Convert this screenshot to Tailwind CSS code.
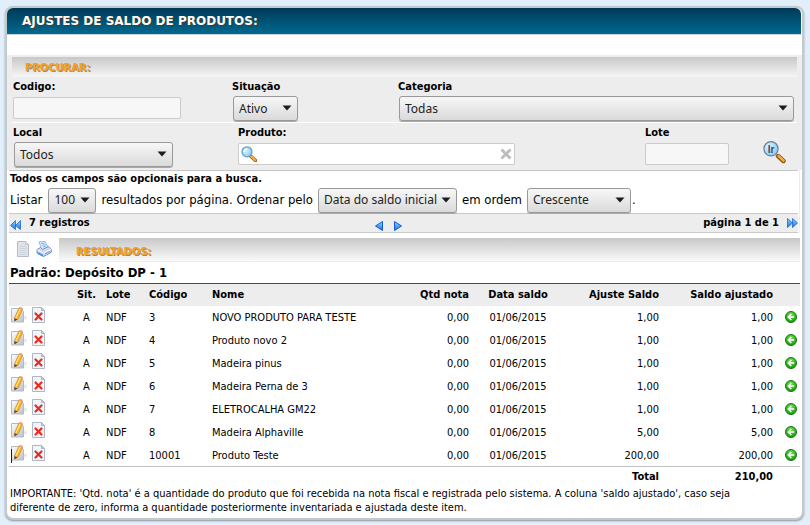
<!DOCTYPE html>
<html lang="pt-BR">

<head>
  <meta charset="UTF-8">
  <meta name="viewport" content="width=device-width, initial-scale=1.0">
  <title>Ajustes de saldo de produtos</title>
  <script src="https://cdn.jsdelivr.net/npm/@tailwindcss/browser@4"></script>
</head>

<body class="min-h-screen bg-[#e1effb] pl-[5px] pr-[6px] pt-[6px] pb-2 font-['DejaVu_Sans_Condensed','DejaVu_Sans',sans-serif] text-[11px] text-black">

  <!-- Shared icons -->
  <svg class="absolute size-0" aria-hidden="true">
    <defs>
      <linearGradient id="blue" x1="0" y1="0" x2="0" y2="1">
        <stop offset="0" stop-color="#8fd4ff" />
        <stop offset="1" stop-color="#1672e8" />
      </linearGradient>
      <radialGradient id="green" cx="0.5" cy="0.3" r="0.7">
        <stop offset="0" stop-color="#6fe04a" />
        <stop offset="1" stop-color="#139a0c" />
      </radialGradient>
      <radialGradient id="lens" cx="0.35" cy="0.35" r="0.8">
        <stop offset="0" stop-color="#dff5fd" />
        <stop offset="1" stop-color="#7cc4ec" />
      </radialGradient>
      <linearGradient id="sheet" x1="0" y1="0" x2="1" y2="1">
        <stop offset="0" stop-color="#ffffff" />
        <stop offset="1" stop-color="#b9c0cc" />
      </linearGradient>
    </defs>
    <symbol id="caret" viewBox="0 0 10 6">
      <path d="M0.500 0.500h9L5 5.500z" fill="#1c1c1c" />
    </symbol>
    <symbol id="edit" viewBox="0 0 16 16">
      <path d="M0.500 1.500h9l3 3v10.500h-12z" fill="url(#sheet)" stroke="#b3b9c6" />
      <path d="M13.500 8l2.500 2.500-2.500 2.500z" fill="#dcdfe4" />
      <path d="M3.500 11L8 1l3.500 1.500L7.200 12l-3 1.500z" fill="#fbb320" stroke="#d08a1c" stroke-width="0.700" />
      <path d="M4.900 11L9.200 2" stroke="#ffe48a" stroke-width="1.200" />
      <path d="M7.900 1.300L8.800 -0.300l3.200 1.300-0.600 1.700z" fill="#e9a08c" />
      <path d="M3.500 11.300l-0.300 3L6.500 12.600z" fill="#4d4238" />
    </symbol>
    <symbol id="delete" viewBox="0 0 16 16">
      <path d="M1.500 0.500h9l3 3v12h-12z" fill="#f1f4f9" stroke="#b0b7c4" />
      <path d="M10.500 0.500v3h3z" fill="#c9cfda" stroke="#a3abb9" stroke-width="0.800" />
      <path d="M4.500 6.500l6 6M10.500 6.500l-6 6" stroke="#ee2a1c" stroke-width="2.200" stroke-linecap="round" />
    </symbol>
    <symbol id="page" viewBox="0 0 16 16">
      <path d="M2.500 0.500h8l3 3v12h-11z" fill="#dfe4ea" stroke="#b4bbc6" />
      <path d="M10.500 0.500v3h3z" fill="#f5f7fa" stroke="#b4bbc6" stroke-width="0.800" />
      <path d="M4.500 5.500h7M4.500 7.500h7M4.500 9.500h7M4.500 11.500h7M4.500 13.500h7" stroke="#cdd4db" />
    </symbol>
    <symbol id="print" viewBox="0 0 16 16">
      <path d="M3 0.800l6-0.300 3 5.500-6 3z" fill="#dcecff" stroke="#86a9e0" stroke-width="0.800" />
      <path d="M5 2.500l3.500-0.300M6 4.200l3.700-0.400M7 6l3-1" stroke="#7faef0" stroke-width="0.900" />
      <path d="M1 8.500l3.500-2 2 2 6-3 2.700 2.500v3.500l-7.700 4L1 12z" fill="#cfd9f2" stroke="#6f87bd" stroke-width="0.900" />
      <path d="M1.500 8.700l6 3.500 7.500-4" fill="none" stroke="#fff" />
      <path d="M2 12l5 2.800" stroke="#3f8cf0" stroke-width="1.700" />
      <path d="M9 12.800l5-2.400" stroke="#7a92c8" />
    </symbol>
    <symbol id="back" viewBox="0 0 12 12">
      <circle cx="6" cy="6" r="5.500" fill="url(#green)" stroke="#15780f" />
      <path d="M6.300 3L3.300 6l3 3M3.500 6h5.700" fill="none" stroke="#fff" stroke-width="1.600" />
    </symbol>
    <symbol id="magnifier" viewBox="0 0 16 16">
      <path d="M9.500 10l5 4.500" stroke="#9a5a18" stroke-width="3.600" stroke-linecap="round" />
      <path d="M10 10.200l4.300 4" stroke="#f7b54a" stroke-width="2" stroke-linecap="round" />
      <circle cx="6" cy="5.800" r="5" fill="url(#lens)" stroke="#5a9fca" stroke-width="1.200" />
      <path d="M3.200 6a3 3 0 0 1 2.500-3" fill="none" stroke="#fff" stroke-width="1.400" />
    </symbol>
    <symbol id="previous" viewBox="0 0 8 10">
      <path d="M7.500 0.500v9L0.500 5z" fill="url(#blue)" stroke="#0f5cd0" />
    </symbol>
    <symbol id="next" viewBox="0 0 8 10">
      <path d="M0.500 0.500v9l7-4.500z" fill="url(#blue)" stroke="#0f5cd0" />
    </symbol>
    <symbol id="first" viewBox="0 0 11 10">
      <path d="M5.500 0.500v9L0.500 5.500zM10.500 0.500v9L5.500 5.500z" fill="url(#blue)" stroke="#1a66cf" stroke-width="0.800" />
    </symbol>
    <symbol id="last" viewBox="0 0 11 10">
      <path d="M0.500 0.500v9L5.500 5zM5.500 0.500v9l5-4.500z" fill="url(#blue)" stroke="#1a66cf" stroke-width="0.800" />
    </symbol>
  </svg>

  <main class="rounded-lg border-2 border-[#c3cace] bg-white pb-[3px] shadow-[0_1px_2px_#8c9499]">
    <h1 class="mr-px h-[27px] rounded-t-md border-b border-[#c9d3d8] bg-linear-to-b from-[#003a58] to-[#006a8f] pl-[15px] font-['DejaVu_Sans',sans-serif] text-xs/[26px] font-bold text-white [text-shadow:1px_1px_1px_#4a3a30]">AJUSTES DE SALDO DE PRODUTOS:</h1>

    <form class="mt-5">
      <!-- Search -->
      <section class="bg-[#ededed] pl-[5px] pr-[5px] pt-[2px] pb-px">
        <h2 class="h-5 bg-linear-to-b from-[#c8c8c8] to-[#f6f6f6] pl-[13px] text-[11px]/[21px] font-bold text-[#f9a11b] [text-shadow:1px_1px_0_#8f8878]">PROCURAR:</h2>

        <div class="flex h-[46px] border-b border-white pr-[3px] pt-[2px]">
          <div class="w-[220px] pl-px">
            <label for="codigo" class="block h-[18px] text-[11px]/[15px] font-bold">Codigo:</label>
            <input id="codigo" type="text" class="block h-[22px] w-[168px] rounded-xs border border-[#cbcbcb] bg-[#f7f7f7] px-1">
          </div>
          <div class="w-[166px]">
            <label for="situacao" class="block h-[17px] text-[11px]/[15px] font-bold">Situação</label>
            <div class="relative ml-px w-[65px]">
              <select id="situacao" class="block h-[25px] w-full appearance-none rounded-[3px] border border-[#999] bg-linear-to-b from-[#f7f7f7] to-[#dadada] pl-[5px] font-['Noto_Sans',sans-serif] text-xs text-[#222] shadow-[0_1px_0_#aaa]">
                <option>Ativo</option>
              </select>
              <svg class="pointer-events-none absolute right-[6px] top-[9px] h-[6px] w-[10px]"><use href="#caret" /></svg>
            </div>
          </div>
          <div class="flex-1">
            <label for="categoria" class="block h-[17px] text-[11px]/[15px] font-bold">Categoria</label>
            <div class="relative ml-px">
              <select id="categoria" class="block h-[25px] w-full appearance-none rounded-[3px] border border-[#999] bg-linear-to-b from-[#f7f7f7] to-[#dadada] pl-[5px] font-['Noto_Sans',sans-serif] text-xs text-[#222] shadow-[0_1px_0_#aaa]">
                <option>Todas</option>
              </select>
              <svg class="pointer-events-none absolute right-[6px] top-[9px] h-[6px] w-[10px]"><use href="#caret" /></svg>
            </div>
          </div>
        </div>

        <div class="flex h-[46px] pt-[2px]">
          <div class="w-[226px] pl-px">
            <label for="local" class="block h-[17px] text-[11px]/[15px] font-bold">Local</label>
            <div class="relative ml-px w-[159px]">
              <select id="local" class="block h-[25px] w-full appearance-none rounded-[3px] border border-[#999] bg-linear-to-b from-[#f7f7f7] to-[#dadada] pl-[5px] font-['Noto_Sans',sans-serif] text-xs text-[#222] shadow-[0_1px_0_#aaa]">
                <option>Todos</option>
              </select>
              <svg class="pointer-events-none absolute right-[6px] top-[9px] h-[6px] w-[10px]"><use href="#caret" /></svg>
            </div>
          </div>
          <div class="flex-1">
            <label for="produto" class="block h-[18px] text-[11px]/[15px] font-bold">Produto:</label>
            <div class="flex h-[22px] w-[277px] items-center rounded-xs border border-[#cbcbcb] bg-white px-[2px]">
              <svg class="size-4"><use href="#magnifier" /></svg>
              <input id="produto" type="text" class="min-w-0 flex-1 px-1 outline-none">
              <button type="button" aria-label="Limpar">
                <svg class="size-[12px]" viewBox="0 0 12 12"><path d="M1.500 1.500l9 9M10.500 1.500l-9 9" stroke="#bdbdbd" stroke-width="3" /></svg>
              </button>
            </div>
          </div>
          <div class="w-[118px]">
            <label for="lote" class="block h-[18px] text-[11px]/[15px] font-bold">Lote</label>
            <input id="lote" type="text" class="block h-[22px] w-[84px] rounded-xs border border-[#cbcbcb] bg-[#f7f7f7] px-1">
          </div>
          <button type="submit" aria-label="Ir" class="mr-[11px] mt-4 size-[23px]">
            <svg class="size-[23px]" viewBox="0 0 23 23">
              <path d="M15 15l5.500 5" stroke="#8a5520" stroke-width="4.400" stroke-linecap="round" />
              <path d="M15.500 15l5 4.700" stroke="#f8b13f" stroke-width="2.400" stroke-linecap="round" />
              <circle cx="8" cy="7.800" r="7.100" fill="url(#lens)" stroke="#6a7fa0" stroke-width="1.200" />
              <text x="8" y="11.500" text-anchor="middle" font-family="Liberation Sans" font-size="10" font-weight="bold" fill="#39456a">Ir</text>
            </svg>
          </button>
        </div>
      </section>

      <!-- Paging options -->
      <section class="mr-[2px] border-r border-[#ededed] pl-[2px] pr-px">
        <p class="border-t border-[#c6c6c6] pl-px text-[11px]/[16px] font-bold">Todos os campos são opcionais para a busca.</p>
        <div class="flex h-[26px] items-center gap-[5px] pl-px text-[13px]">
          <label for="listar">Listar</label>
          <div class="relative ml-px w-12">
            <select id="listar" class="block h-[25px] w-full appearance-none rounded-[3px] border border-[#999] bg-linear-to-b from-[#f7f7f7] to-[#dadada] pl-[5px] font-['Noto_Sans',sans-serif] text-xs text-[#222] shadow-[0_1px_0_#aaa]">
              <option>100</option>
            </select>
            <svg class="pointer-events-none absolute right-[6px] top-[9px] h-[6px] w-[10px]"><use href="#caret" /></svg>
          </div>
          <label for="ordenar">resultados por página. Ordenar pelo</label>
          <div class="relative w-[139px]">
            <select id="ordenar" class="block h-[25px] w-full appearance-none rounded-[3px] border border-[#999] bg-linear-to-b from-[#f7f7f7] to-[#dadada] pl-[5px] font-['Noto_Sans',sans-serif] text-xs text-[#222] shadow-[0_1px_0_#aaa]">
              <option>Data do saldo inicial</option>
            </select>
            <svg class="pointer-events-none absolute right-[6px] top-[9px] h-[6px] w-[10px]"><use href="#caret" /></svg>
          </div>
          <label for="ordem">em ordem</label>
          <div class="relative w-[104px]">
            <select id="ordem" class="block h-[25px] w-full appearance-none rounded-[3px] border border-[#999] bg-linear-to-b from-[#f7f7f7] to-[#dadada] pl-[5px] font-['Noto_Sans',sans-serif] text-xs text-[#222] shadow-[0_1px_0_#aaa]">
              <option>Crescente</option>
            </select>
            <svg class="pointer-events-none absolute right-[6px] top-[9px] h-[6px] w-[10px]"><use href="#caret" /></svg>
          </div>
          <span class="-ml-1">.</span>
        </div>
        <nav class="flex h-5 items-center border-y border-[#c9c9c9] bg-[#ededed] pl-px font-bold">
          <div class="flex flex-1 items-center gap-2">
            <a href="#" aria-label="Primeira" class="pt-1"><svg class="h-[10px] w-[11px]"><use href="#first" /></svg></a>
            <span>7 registros</span>
          </div>
          <div class="mr-8 flex gap-[11px] pt-[6px]">
            <a href="#" aria-label="Anterior"><svg class="h-[10px] w-2"><use href="#previous" /></svg></a>
            <a href="#" aria-label="Próxima"><svg class="h-[10px] w-2"><use href="#next" /></svg></a>
          </div>
          <div class="flex flex-1 items-center justify-end gap-2">
            <span>página 1 de 1</span>
            <a href="#" aria-label="Última"><svg class="h-[10px] w-[11px]"><use href="#last" /></svg></a>
          </div>
        </nav>
      </section>
    </form>

    <!-- Results -->
    <section class="mt-[5px] pl-[2px] pr-[2px]">
      <div class="flex h-6">
        <div class="flex w-[50px] gap-[5px] pl-[6px] pt-[3px]">
          <button type="button" aria-label="Exportar" class="size-4"><svg class="size-4"><use href="#page" /></svg></button>
          <button type="button" aria-label="Imprimir" class="size-4"><svg class="size-4"><use href="#print" /></svg></button>
        </div>
        <h2 class="flex-1 border-b border-[#ededed] bg-linear-to-b from-[#c8c8c8] to-[#fafafa] pl-[17px] text-[11px]/[27px] font-bold text-[#f9a11b] [text-shadow:1px_1px_0_#8f8878]">RESULTADOS:</h2>
      </div>
      <h3 class="pl-px pt-px text-[13px]/[20px] font-bold">Padrão: Depósito DP - 1</h3>
      <table class="w-full table-fixed border-t border-[#992f00]">
        <colgroup>
          <col class="w-[66px]">
          <col class="w-[23px]">
          <col class="w-[43px]">
          <col class="w-[63px]">
          <col>
          <col class="w-[80px]">
          <col class="w-[82px]">
          <col class="w-[108px]">
          <col class="w-[114px]">
          <col class="w-[19px]">
        </colgroup>
        <thead>
          <tr class="h-[22px] bg-[#ededed] text-left">
            <td></td>
            <th class="pt-px text-center">Sit.</th>
            <th class="pt-px pl-2">Lote</th>
            <th class="pt-px pl-2">Código</th>
            <th class="pt-px pl-2">Nome</th>
            <th class="pt-px pr-2 text-right">Qtd nota</th>
            <th class="pt-px text-center">Data saldo</th>
            <th class="pt-px pr-2 text-right">Ajuste Saldo</th>
            <th class="pt-px pr-2 text-right">Saldo ajustado</th>
            <td></td>
          </tr>
        </thead>
        <tbody id="produtos"></tbody>
        <tfoot>
          <tr class="h-5 border-t border-[#c0c0c0] font-bold">
            <td colspan="8" class="pr-2 text-right">Total</td>
            <td class="pr-2 text-right">210,00</td>
            <td></td>
          </tr>
        </tfoot>
      </table>
      <p class="pl-px pr-10 text-[11px]/[14px]">IMPORTANTE: 'Qtd. nota' é a quantidade do produto que foi recebida na nota fiscal e registrada pelo sistema. A coluna 'saldo ajustado', caso seja diferente de zero, informa a quantidade posteriormente inventariada e ajustada deste item.</p>
    </section>
  </main>

  <script>
  const produtos = [
    ['3', 'NOVO PRODUTO PARA TESTE', '1,00'],
    ['4', 'Produto novo 2', '1,00'],
    ['5', 'Madeira pinus', '1,00'],
    ['6', 'Madeira Perna de 3', '1,00'],
    ['7', 'ELETROCALHA GM22', '1,00'],
    ['8', 'Madeira Alphaville', '5,00'],
    ['10001', 'Produto Teste', '200,00'],
  ];

  document.getElementById('produtos').innerHTML = produtos.map(([codigo, nome, saldo]) => `
    <tr class="group h-[23px]">
      <td>
        <div class="relative flex gap-1 pb-1 pl-[2px]">
          <button type="button" aria-label="Editar ${nome}" class="size-4"><svg class="size-4"><use href="#edit" /></svg></button>
          <button type="button" aria-label="Excluir ${nome}" class="size-4"><svg class="size-4"><use href="#delete" /></svg></button>
          <span class="absolute left-[2px] top-1 hidden h-[14px] w-px bg-[#10108a] group-last:block"></span>
        </div>
      </td>
      <td class="pt-[2px] text-center">A</td>
      <td class="pt-[2px] pl-2">NDF</td>
      <td class="pt-[2px] pl-2">${codigo}</td>
      <td class="pt-[2px] pl-2">${nome}</td>
      <td class="pt-[2px] pr-2 text-right">0,00</td>
      <td class="pt-[2px] text-center">01/06/2015</td>
      <td class="pt-[2px] pr-2 text-right">${saldo}</td>
      <td class="pt-[2px] pr-2 text-right">${saldo}</td>
      <td><button type="button" aria-label="Ajustar ${nome}" class="mx-auto block size-3"><svg class="size-3"><use href="#back" /></svg></button></td>
    </tr>`).join('');
  </script>
</body>

</html>
